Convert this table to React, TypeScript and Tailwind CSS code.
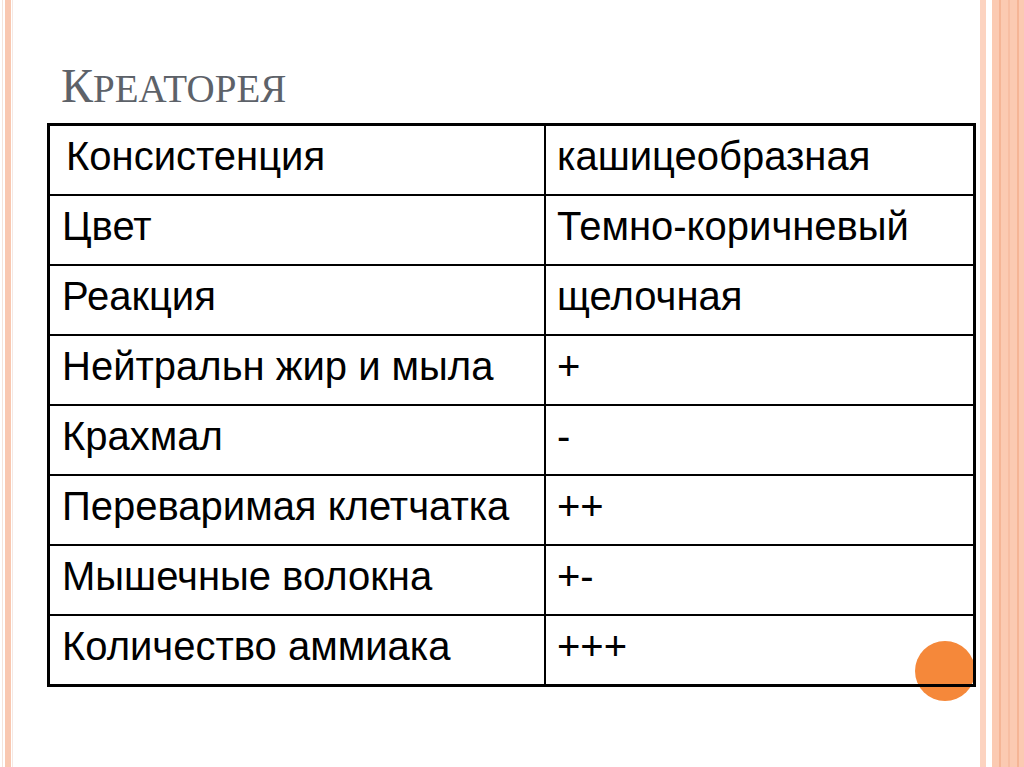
const rows = [
  ['Консистенция', 'кашицеобразная'],
  ['Цвет', 'Темно-коричневый'],
  ['Реакция', 'щелочная'],
  ['Нейтральн жир и мыла', '+'],
  ['Крахмал', '-'],
  ['Переваримая клетчатка', '++'],
  ['Мышечные волокна', '+-'],
  ['Количество аммиака', '+++'],
];

export default function App() {
  return (
    <div className="relative flex h-[767px] w-[1024px] overflow-hidden bg-white">
      {/* left frame stripes */}
      <div className="flex h-full w-[13px] shrink-0">
        <div className="ml-[2px] w-px bg-[#f4e4dc]" />
        <div className="ml-[2px] w-[6px] bg-[#f9c8b1]" />
        <div className="ml-[1px] w-px bg-[#f6e8e2]" />
      </div>

      {/* slide content */}
      <div className="relative flex w-[967px] shrink-0 flex-col pl-[34px] pr-[4px]">
        <h1
          className="mt-[62px] mb-[13px] ml-[14px] h-[48px] text-[#5d6269] leading-[48px]"
          style={{ fontFamily: '"Liberation Serif", "Times New Roman", serif' }}
        >
          <span className="text-[48px]">К</span>
          <span className="text-[39px]">РЕАТОРЕЯ</span>
        </h1>

        {/* orange bullet under the table */}
        <div className="absolute left-[902px] top-[641px] h-[60px] w-[60px] rounded-full bg-[#f5883a]" />

        <div
          className="relative z-10 w-[929px] border-[3px] border-black text-black"
          style={{ fontFamily: '"Liberation Sans", Arial, sans-serif' }}
        >
          {rows.map(([name, value], i) => (
            <div
              key={i}
              className={`grid h-[68px] grid-cols-[496px_1fr] ${i > 0 ? 'border-t-2 border-black h-[70px]' : ''}`}
            >
              <div
                className={`border-r-2 border-black pt-[10px] text-[40px] leading-10 ${i === 0 ? 'pl-[16px]' : 'pl-[12px]'}`}
              >
                {name}
              </div>
              <div className="pl-[11px] pt-[10px] text-[40px] leading-10">{value}</div>
            </div>
          ))}
        </div>
      </div>

      {/* right frame stripes */}
      <div className="flex h-full flex-1">
        <div className="w-[6px] bg-[#fcd3c0]" />
        <div className="w-[6px] bg-white" />
        <div className="flex flex-1 bg-[#fbcab2]">
          <div className="ml-[7px] w-[2px] bg-[#f5b596]" />
          <div className="ml-[7px] w-[2px] bg-[#f7bea3]" />
          <div className="ml-[7px] w-[2px] bg-[#f5b596]" />
        </div>
      </div>
    </div>
  );
}
